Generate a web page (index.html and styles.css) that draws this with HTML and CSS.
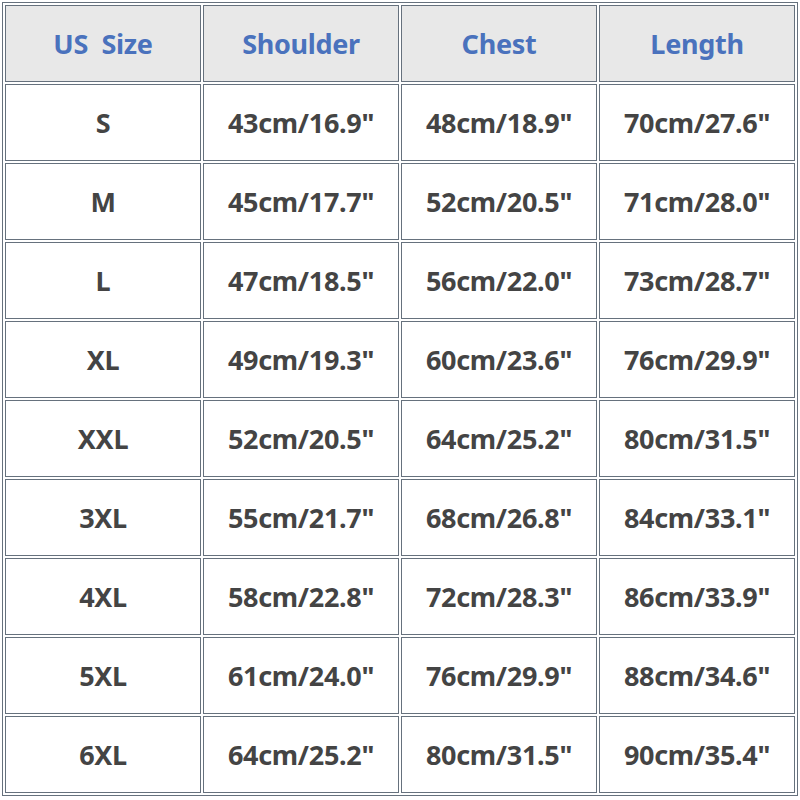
FILE: index.html
```html
<!DOCTYPE html>
<html>
<head>
<meta charset="utf-8">
<link rel="stylesheet" href="styles.css">
</head>
<body>
<table class="size-table">
  <thead>
    <tr><th>US&nbsp;&nbsp;Size</th><th>Shoulder</th><th>Chest</th><th>Length</th></tr>
  </thead>
  <tbody>
    <tr><td>S</td><td>43cm/16.9"</td><td>48cm/18.9"</td><td>70cm/27.6"</td></tr>
    <tr><td>M</td><td>45cm/17.7"</td><td>52cm/20.5"</td><td>71cm/28.0"</td></tr>
    <tr><td>L</td><td>47cm/18.5"</td><td>56cm/22.0"</td><td>73cm/28.7"</td></tr>
    <tr><td>XL</td><td>49cm/19.3"</td><td>60cm/23.6"</td><td>76cm/29.9"</td></tr>
    <tr><td>XXL</td><td>52cm/20.5"</td><td>64cm/25.2"</td><td>80cm/31.5"</td></tr>
    <tr><td>3XL</td><td>55cm/21.7"</td><td>68cm/26.8"</td><td>84cm/33.1"</td></tr>
    <tr><td>4XL</td><td>58cm/22.8"</td><td>72cm/28.3"</td><td>86cm/33.9"</td></tr>
    <tr><td>5XL</td><td>61cm/24.0"</td><td>76cm/29.9"</td><td>88cm/34.6"</td></tr>
    <tr><td>6XL</td><td>64cm/25.2"</td><td>80cm/31.5"</td><td>90cm/35.4"</td></tr>
  </tbody>
</table>
</body>
</html>
```

FILE: styles.css
```css
html, body {
  margin: 0;
  padding: 0;
  background: #ffffff;
}
body {
  padding: 2px;
}
.size-table {
  border: 1px solid #66717d;
  border-spacing: 2px;
  border-collapse: separate;
  table-layout: fixed;
  width: 796px;
  font-family: "Noto Sans", "Noto Sans CJK KR", sans-serif;
  font-weight: bold;
}
.size-table th,
.size-table td {
  border: 1px solid #66717d;
  width: 194px;
  height: 75px;
  padding: 0;
  text-align: center;
  vertical-align: middle;
  font-size: 27px;
  letter-spacing: -0.3px;
  white-space: nowrap;
}
.size-table th {
  background: #e8e8e8;
  color: #4a72bd;
}
.size-table td {
  background: #ffffff;
  color: #444444;
}
```
